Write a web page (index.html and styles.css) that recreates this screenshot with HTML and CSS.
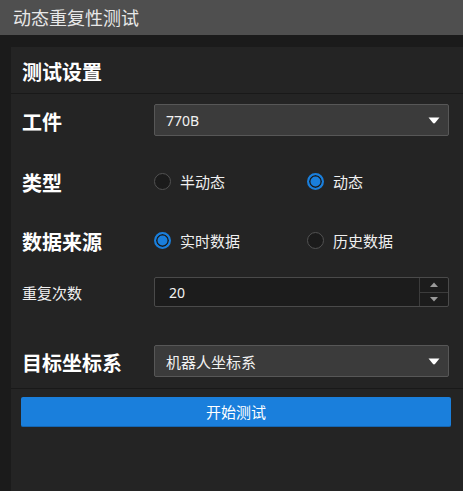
FILE: index.html
```html
<!DOCTYPE html>
<html lang="zh-CN">
<head>
<meta charset="utf-8">
<title>动态重复性测试</title>
<link rel="stylesheet" href="styles.css">
</head>
<body>
<div class="window">
  <div class="titlebar">动态重复性测试</div>
  <div class="content">
    <div class="panel">
      <div class="panel-header">测试设置</div>
      <div class="form">
        <div class="row row-first">
          <div class="label bold">工件</div>
          <div class="select">
            <span class="select-text">770B</span>
            <svg class="caret" width="12" height="7" viewBox="0 0 12 7"><path d="M0.5 0.5 H11.5 L7.2 5.8 Q6 7 4.8 5.8 Z" fill="#ffffff"/></svg>
          </div>
        </div>
        <div class="row row-radio row-type">
          <div class="label bold">类型</div>
          <div class="radios">
            <label class="radio"><span class="dot"></span><span>半动态</span></label>
            <label class="radio"><span class="dot checked"></span><span>动态</span></label>
          </div>
        </div>
        <div class="row row-radio row-source">
          <div class="label bold">数据来源</div>
          <div class="radios">
            <label class="radio"><span class="dot checked"></span><span>实时数据</span></label>
            <label class="radio"><span class="dot"></span><span>历史数据</span></label>
          </div>
        </div>
        <div class="row row-spin">
          <div class="label">重复次数</div>
          <div class="spinbox">
            <span class="spin-value">20</span>
            <div class="spin-buttons">
              <div class="spin-btn"><svg width="8" height="5" viewBox="0 0 8 5"><path d="M0 5 L4 0.5 L8 5 Z" fill="#9a9a9a"/></svg></div>
              <div class="spin-btn"><svg width="8" height="5" viewBox="0 0 8 5"><path d="M0 0 L8 0 L4 4.5 Z" fill="#9a9a9a"/></svg></div>
            </div>
          </div>
        </div>
        <div class="row row-target">
          <div class="label bold">目标坐标系</div>
          <div class="select">
            <span class="select-text cjk">机器人坐标系</span>
            <svg class="caret" width="12" height="7" viewBox="0 0 12 7"><path d="M0.5 0.5 H11.5 L7.2 5.8 Q6 7 4.8 5.8 Z" fill="#ffffff"/></svg>
          </div>
        </div>
      </div>
      <div class="actions">
        <button class="start">开始测试</button>
      </div>
    </div>
  </div>
</div>
</body>
</html>
```

FILE: styles.css
```css
* { box-sizing: border-box; }
html, body {
  margin: 0;
  padding: 0;
  background: #1b1b1b;
  width: 463px;
  height: 491px;
  overflow: hidden;
  font-family: "Noto Sans", "Noto Sans CJK SC", sans-serif;
  color: #f0f0f0;
}
.window {
  display: flex;
  flex-direction: column;
  height: 491px;
}
.titlebar {
  height: 35px;
  background: #4f4f4f;
  color: #e8e8e8;
  font-size: 18px;
  line-height: 34px;
  padding-left: 13px;
  font-family: "Noto Sans CJK SC", sans-serif;
}
.content {
  flex: 1;
  padding: 12px 0 0 11px;
  display: flex;
}
.panel {
  flex: 1;
  background: #242424;
  display: flex;
  flex-direction: column;
}
.panel-header {
  height: 47px;
  border-bottom: 1px solid #191919;
  padding-left: 11px;
  font-size: 20px;
  font-weight: bold;
  line-height: 50px;
  color: #ffffff;
  font-family: "Noto Sans CJK SC", sans-serif;
}
.form {
  padding: 0 14px 11px 11px;
  border-bottom: 1px solid #191919;
}
.row {
  display: flex;
  align-items: center;
}
.label {
  width: 132px;
  flex: none;
  font-size: 15px;
  color: #f0f0f0;
  font-family: "Noto Sans CJK SC", sans-serif;
}
.label.bold {
  font-size: 20px;
  font-weight: bold;
  color: #ffffff;
  padding-top: 3px;
}
.row-first { margin-top: 10px; height: 32px; }
.row-type { margin-top: 35px; height: 20px; }
.row-source { margin-top: 39px; height: 20px; }
.row-spin { margin-top: 27px; height: 30px; }
.row-target { margin-top: 38px; height: 32px; }
.select {
  flex: 1;
  height: 32px;
  background: #3b3b3b;
  border: 1px solid #575757;
  border-radius: 2px;
  display: flex;
  align-items: center;
  justify-content: space-between;
  padding: 0 8px 0 11px;
}
.select-text {
  font-size: 14px;
  color: #f2f2f2;
}
.select-text.cjk {
  font-size: 15px;
  font-family: "Noto Sans CJK SC", sans-serif;
}
.caret { display: block; }
.radios {
  flex: 1;
  display: grid;
  grid-template-columns: 153px 1fr;
}
.radio {
  display: flex;
  align-items: center;
  gap: 9px;
  font-size: 15px;
  color: #f0f0f0;
  font-family: "Noto Sans CJK SC", sans-serif;
}
.dot {
  width: 17px;
  height: 17px;
  border-radius: 50%;
  background: #1b1b1b;
  border: 1.5px solid #525252;
  flex: none;
}
.dot.checked {
  border: 2px solid #1a7fdc;
  background: #1a7fdc;
  box-shadow: inset 0 0 0 1.5px #1b1b1b;
}
.spinbox {
  flex: 1;
  height: 30px;
  background: #1c1c1c;
  border: 1px solid #4a4a4a;
  border-radius: 2px;
  display: flex;
  align-items: center;
}
.spin-value {
  flex: 1;
  padding-left: 14px;
  font-size: 14px;
  color: #f2f2f2;
}
.spin-buttons {
  width: 29px;
  height: 100%;
  border-left: 1px solid #3c3c3c;
  display: flex;
  flex-direction: column;
}
.spin-btn {
  flex: 1;
  display: flex;
  align-items: center;
  justify-content: center;
}
.spin-btn + .spin-btn {
  border-top: 1px solid #3c3c3c;
}
.spin-btn svg { display: block; }
.actions {
  padding: 8px 12px 0 10px;
}
.start {
  width: 100%;
  height: 30px;
  background: #1a7fdc;
  border: none;
  border-bottom: 1px solid #1466b3;
  border-radius: 2px;
  color: #ffffff;
  font-size: 15px;
  font-family: "Noto Sans CJK SC", sans-serif;
  padding: 0;
}
```
